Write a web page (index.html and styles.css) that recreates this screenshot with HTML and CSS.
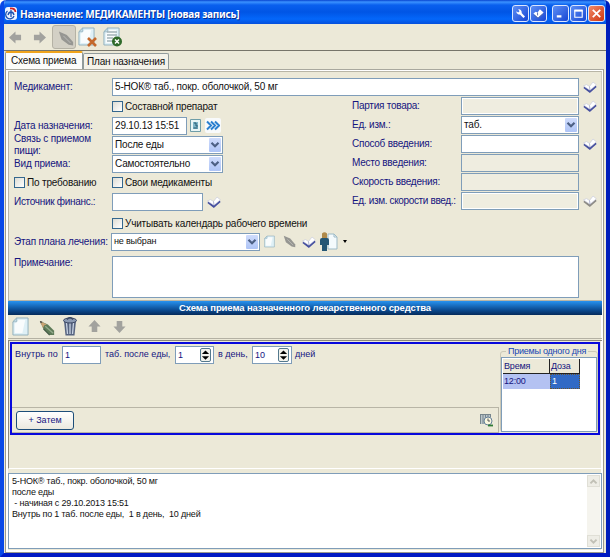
FILE: index.html
```html
<!DOCTYPE html>
<html lang="ru">
<head>
<meta charset="utf-8">
<title>Назначение: МЕДИКАМЕНТЫ</title>
<link rel="stylesheet" href="styles.css">
</head>
<body>
<svg width="0" height="0" class="defs">
  <symbol id="book" viewBox="0 0 14 12"><path d="M1 6.200 6.800 10.600 13 5.200" fill="none" stroke="currentColor" stroke-width="2"/><path d="M.5 5 3.500 3.600 6.500 5.500 10 1 13.300 3.800 7 9.200Z" fill="#fff" stroke="#c3c6da" stroke-width=".6"/><path d="M6.500 5.500 7 9" stroke="#9aa0c4" stroke-width=".8"/></symbol>
  <symbol id="page" viewBox="0 0 18 20"><path d="M5 1h12v18H1V5Z" fill="#dff0f6" stroke="#8faebb"/><path d="M7 3h7l-3 14H3V7Z" fill="#fff" opacity=".8"/><path d="M5 1v4H1Z" fill="#c4dce6" stroke="#8faebb" stroke-width=".7"/></symbol>
  <symbol id="chev" viewBox="0 0 10 8"><path d="M1.500 1.800 5 5.300 8.500 1.800" fill="none" stroke="currentColor" stroke-width="2.200"/></symbol>
  <symbol id="arrow" viewBox="0 0 14 14"><path d="M0 7 7 0.500V4h6v6H7v3.500Z" fill="#a2a29e"/></symbol>
  <symbol id="pencil" viewBox="0 0 18 18"><path d="M1 1 5 10 12 17 17 17 17 12 10 5Z" fill="#5d7a58"/><path d="M1 1 4.500 9 6 6 9 5Z" fill="#c9a273"/><path d="M1 1 2 4 4 2Z" fill="#444"/><path d="M7 7 16 15" stroke="#93ab8c" stroke-width="1.500"/><path d="M5 10 12 17" stroke="#3d5440" stroke-width="1.300"/></symbol>
  <symbol id="pencil-off" viewBox="0 0 18 18"><path d="M1 1 4 10 12 16 17 17 17 13 10 5Z" fill="#969692"/><path d="M6 6 14 14" stroke="#c0c0bc" stroke-width="1"/></symbol>
</svg>
<div class="window">
  <header class="title">
    <svg class="logo" viewBox="0 0 12 13"><rect width="12" height="13" rx="3" fill="#eef3ff"/><path d="M2.500 4A4.300 4.300 0 1 0 9 9M6 3v7M3 8c1-4 5-4 6 0" fill="none" stroke="#1c50b0" stroke-width="1.300"/><path d="M5 1.500Q10 1 10.500 5" fill="none" stroke="#d32525" stroke-width="1.800"/></svg>
    <h1>Назначение: МЕДИКАМЕНТЫ [новая запись]</h1>
    <span class="wb"><svg viewBox="0 0 14 14"><path d="M6 6 11 11" stroke="#fff" stroke-width="2.400"/><path d="M2.500 4.500 4.500 6 6 4.500 4.500 2.500A3.200 3.200 0 0 1 8 7 3.200 3.200 0 0 1 2.500 4.500" fill="#fff"/></svg></span>
    <span class="wb"><svg viewBox="0 0 14 14"><path d="M1.500 7 4 5 6 6 8.500 2.500 12.500 6 6.500 11.500Z" fill="#fff"/><path d="M6 6v3M2 8.500 6.500 12 12 7.500" stroke="#5569a9" fill="none"/></svg></span>
    <span class="wb gap"><svg viewBox="0 0 14 14"><path d="M3 10h5" stroke="#fff" stroke-width="2.400"/></svg></span>
    <span class="wb"><svg viewBox="0 0 14 14"><path d="M3 4h8v7H3Z" fill="none" stroke="#fff" stroke-width="1.200"/><path d="M2.500 3.800h9" stroke="#fff" stroke-width="2"/></svg></span>
    <span class="wb red"><svg viewBox="0 0 14 14"><path d="m3 3 8 8M11 3l-8 8" stroke="#fff" stroke-width="1.900"/></svg></span>
  </header>
  <nav class="bar">
    <svg class="a1"><use href="#arrow"/></svg>
    <svg class="a1 flip"><use href="#arrow"/></svg>
    <span class="pressed"><svg><use href="#pencil-off"/></svg></span>
    <svg class="doc" viewBox="0 0 20 20"><use href="#page" width="17" height="19"/><path d="m10 11 8 8M18 11l-8 8" stroke="#c4682c" stroke-width="2.600"/></svg>
    <svg class="doc" viewBox="0 0 20 20"><use href="#page" width="17" height="19"/><path d="M4 5h10M4 8h10M4 11h6M4 14h6" stroke="#a2b3b8" stroke-width="1.300"/><circle cx="14" cy="14.500" r="5" fill="#2f6a2b"/><path d="m12 12.500 4 4M16 12.500l-4 4" stroke="#fff" stroke-width="1.500"/></svg>
  </nav>
  <div class="tabs"><span class="tab on">Схема приема</span><span class="tab">План назначения</span></div>
  <main class="sheet">
    <section class="form">
      <div class="row r-med"><label class="lb">Медикамент:</label><span class="field grow"><b>5-НОК® таб., покр. оболочкой, 50 мг</b></span><svg class="book"><use href="#book"/></svg></div>
      <div class="cols">
        <div class="left">
          <div class="row r-first"><i class="lb"></i><i class="cb"></i><b>Составной препарат</b></div>
          <div class="row"><label class="lb">Дата назначения:</label><span class="field w-date"><b>29.10.13 15:51</b></span>
            <svg class="cal" viewBox="0 0 11 13"><path d="M.5.500h10v12H.5Z" fill="#e9f5f5" stroke="#6e9da8"/><path d="M3 3h5v7H3Z" fill="#7fb5c8"/><path d="M4 4h2v3h2M3.500 9h4" stroke="#245a70" fill="none"/></svg>
            <span class="next"><svg viewBox="0 0 14 10"><path d="m1 1 4 4-4 4m4-8 4 4-4 4m4-8 4 4-4 4" fill="none" stroke="#2a80cf" stroke-width="2"/></svg></span></div>
          <div class="row"><label class="lb two">Связь с приемом<br>пищи:</label><span class="field w-combo"><b>После еды</b><i class="dd"><svg><use href="#chev"/></svg></i></span></div>
          <div class="row"><label class="lb">Вид приема:</label><span class="field w-combo"><b>Самостоятельно</b><i class="dd"><svg><use href="#chev"/></svg></i></span></div>
          <div class="row"><span class="lb dark"><i class="cb"></i><b>По требованию</b></span><i class="cb"></i><b>Свои медикаменты</b></div>
          <div class="row"><label class="lb tight">Источник финанс.:</label><span class="field w-src"></span><svg class="book"><use href="#book"/></svg></div>
        </div>
        <div class="right">
          <div class="row"><label class="rb">Партия товара:</label><span class="field off"></span><svg class="book"><use href="#book"/></svg></div>
          <div class="row"><label class="rb">Ед. изм.:</label><span class="field"><b>таб.</b><i class="dd"><svg><use href="#chev"/></svg></i></span></div>
          <div class="row"><label class="rb">Способ введения:</label><span class="field"></span><svg class="book"><use href="#book"/></svg></div>
          <div class="row"><label class="rb">Место введения:</label><span class="field flat"></span></div>
          <div class="row"><label class="rb">Скорость введения:</label><span class="field flat"></span></div>
          <div class="row"><label class="rb tight">Ед. изм. скорости введ.:</label><span class="field off"></span><svg class="book gray"><use href="#book"/></svg></div>
        </div>
      </div>
      <div class="row r-cal"><i class="lb"></i><i class="cb"></i><b>Учитывать календарь рабочего времени</b></div>
      <div class="row r-stage"><label class="lb">Этап плана лечения:</label><span class="field w-stage"><b class="small">не выбран</b><i class="dd"><svg><use href="#chev"/></svg></i></span>
        <svg class="s-page"><use href="#page"/></svg><svg class="s-pen"><use href="#pencil-off"/></svg><svg class="book"><use href="#book"/></svg>
        <svg class="s-man" viewBox="0 0 18 19"><path d="M8 2h6l3 3v12H8Z" fill="#f4fafc" stroke="#9dbac6"/><path d="M14 2v3h3" fill="none" stroke="#9dbac6"/><path d="M2 1.500Q4.500-1 7 1.500V6H2Z" fill="#b08a4a"/><path d="M0 8q0-2 2-2h5q2 0 2 2v5H7v6H2v-6H0Z" fill="#245674"/></svg><i class="tri"></i></div>
      <div class="row r-note"><label class="lb">Примечание:</label><span class="field grow"></span></div>
    </section>
    <h2 class="band">Схема приема назначенного лекарственного средства</h2>
    <nav class="bar2">
      <svg class="b-page"><use href="#page"/></svg>
      <svg class="b-pen"><use href="#pencil"/></svg>
      <svg class="b-bin" viewBox="0 0 14 19"><path d="M1 4h12l-1.500 14.500h-9Z" fill="#566480"/><path d="M3.500 6l1 11M7 6v11M10.500 6l-1 11" stroke="#c9d4e4" stroke-width="1.300"/><ellipse cx="7" cy="3.500" rx="6.500" ry="2.500" fill="#8b9ab3" stroke="#3c4964"/><path d="M4 2.500Q7-1.500 10 2.500" fill="none" stroke="#3c4964" stroke-width="1.300"/></svg>
      <svg class="b-ar up"><use href="#arrow"/></svg><svg class="b-ar down"><use href="#arrow"/></svg>
    </nav>
    <section class="well">
      <div class="scheme">
        <div class="plan">
          <div class="dose"><b class="d-in">Внутрь по</b><span class="num">1</span><b class="d-after">таб. после еды,</b><span class="num">1<i><svg viewBox="0 0 10 13"><path d="M1 5.500 5 1.500l4 4ZM1 7.800h8L5 11.800Z"/></svg></i></span><b class="d-day">в день,</b><span class="num last">10<i><svg viewBox="0 0 10 13"><path d="M1 5.500 5 1.500l4 4ZM1 7.800h8L5 11.800Z"/></svg></i></span><b>дней</b></div>
          <div class="then"><span class="btn">+ Затем</span><svg class="clock" viewBox="0 0 14 14"><path d="M0 1h11v10H0Z" fill="#bcc6cb"/><path d="M.5 1v10M3 1v10M5.500 1v4M8 1v3M10.500 1v3M0 1.500h11" stroke="#77858c"/><circle cx="8" cy="8" r="4" fill="#faf7df" stroke="#66809a"/><path d="M8 5.500V8h2" stroke="#555" fill="none"/><path d="M8 12.500h5" stroke="#2e7b35" stroke-width="1.800"/></svg></div>
        </div>
        <fieldset class="takes"><legend>Приемы одного дня</legend>
          <div class="grid"><div class="th">Время</div><div class="th">Доза</div><div class="td">12:00</div><div class="td sel">1</div></div>
        </fieldset>
      </div>
    </section>
    <section class="memo"><div class="lines"><p>5-НОК® таб., покр. оболочкой, 50 мг</p><p>после еды</p><p>&nbsp;- начиная с 29.10.2013 15:51</p><p>Внутрь по 1 таб. после еды,&nbsp; 1 в день,&nbsp; 10 дней</p></div>
      <div class="scroll"><i><svg class="rot"><use href="#chev"/></svg></i><i><svg><use href="#chev"/></svg></i></div></section>
  </main>
</div>
</body>
</html>
```
FILE: styles.css
```css
* { box-sizing: border-box; }
body { margin: 0; width: 610px; height: 557px; overflow: hidden; background: #fff; font: 10px/13px "Liberation Sans", Arial, sans-serif; letter-spacing: -.18px; color: #111; }
b { font-weight: normal; white-space: nowrap; }
i { font-style: normal; }
svg { display: block; flex: none; }
.defs { position: absolute; }
.window { width: 610px; height: 557px; border: solid #0a3fe0; border-width: 0 4px 4px; border-color: #0831d9 #001ebb #0019c4 #0848e8; border-radius: 6px 6px 0 0; background: #ece9d8; overflow: hidden; }
.title { height: 24px; margin: 0 -4px; padding: 3px 5px 0; display: flex; align-items: center; background: linear-gradient(#0844d0 0, #3b92ff 2px, #0a60ee 5px, #0055e5 12px, #0467fa 19px, #0550dc 24px); }
.logo { width: 12px; height: 13px; }
.title h1 { flex: 1; margin: 0 0 0 3px; font: bold 10px/14px "Noto Sans", sans-serif; letter-spacing: -.24px; color: #fff; text-shadow: 1px 1px #0a2b8c; white-space: nowrap; }
.wb { width: 17px; height: 17px; margin-left: 1px; padding: 1px; border: 1px solid #dce7ff; border-radius: 3px; background: linear-gradient(135deg, #5d8ff5, #1746d4); }
.wb svg { width: 13px; height: 13px; }
.wb.gap { margin-left: 5px; }
.wb.red { background: linear-gradient(135deg, #f08a68, #cf3510); }
.bar { height: 27px; border-bottom: 1px solid #77756a; display: flex; align-items: center; padding-left: 5px; }
.a1 { width: 13px; height: 13px; margin-right: 11px; }
.flip { transform: scaleX(-1); margin-right: 6px; }
.pressed { width: 24px; height: 24px; border: 1px solid #b5b2a5; border-radius: 3px; background: #d3d0c5; padding: 4px 2px 0 5px; margin-right: 2px; }
.pressed svg { width: 16px; height: 17px; }
.doc { width: 20px; height: 20px; margin-right: 5px; }
.tabs { height: 18px; display: flex; align-items: flex-end; padding-left: 1px; }
.tab { width: 86px; height: 16px; border: 1px solid #919b9c; border-bottom: 0; border-radius: 2px 2px 0 0; background: #f4f2e9; padding: 1px 3px; white-space: nowrap; }
.tab.on { width: 78px; height: 18px; background: #fcfcfa; border-top: 2px solid #f0a41c; padding: 1px 5px; }
.sheet { height: 484px; border: 1px solid #9b9a8f; border-top: 1px solid #a9a89e; margin: 0 2px 0 1px; padding: 1px 0 0 2px; box-shadow: inset 2px 2px #fff, inset -2px -2px #fff; }
.form { height: 230px; border: 1px solid #b8b5a6; border-right-color: #d2cfc0; padding: 5px 0 0 5px; width: 594px; }
.row { height: 19px; display: flex; align-items: center; }
.lb { width: 98px; color: #15157f; white-space: nowrap; flex: none; }
.two { line-height: 12px; }
.tight { letter-spacing: -.3px; }
.dark { display: flex; color: #111; align-items: center; }
.field { height: 18px; border: 1px solid #7f9db9; background: #fff; display: flex; align-items: center; padding-left: 2px; flex: none; }
.r-med .grow, .r-note .grow { width: 467px; }
.book { width: 14px; height: 12px; margin-left: 4px; color: #4650a0; }
.gray { color: #8d8b86; }
.cb { width: 11px; height: 11px; border: 1px solid #34678e; background: linear-gradient(135deg, #dddcd4, #fff); margin-right: 2px; flex: none; }
.cols { display: flex; height: 115px; }
.left { width: 338px; }
.r-first { height: 20px; }
.w-date { width: 75px; margin-right: 3px; }
.cal { width: 11px; height: 13px; }
.next { width: 16px; height: 15px; margin-left: 4px; padding: 2px 1px; background: #f8fafb; border-radius: 2px; }
.next svg { width: 14px; height: 11px; }
.w-combo { width: 111px; }
.w-src { width: 91px; }
.dd { width: 12px; height: 14px; background: linear-gradient(#cfdcfc, #aec4f6); border-radius: 1px; margin: 0 1px 0 auto; display: grid; place-items: center; color: #4d6185; }
.dd svg { width: 10px; height: 8px; }
.rb { width: 109px; color: #15157f; white-space: nowrap; flex: none; letter-spacing: -.25px; }
.rb.tight { letter-spacing: -.35px; }
.right .field { width: 118px; }
.off, .flat { background: #efede0; }
.off { box-shadow: inset 0 0 0 1px #fff; }
.r-cal { margin-top: 4px; height: 17px; }
.r-stage { height: 19px; }
.w-stage { width: 149px; margin-left: -1px; }
.small { font-size: 9px; }
.s-page { width: 11px; height: 13px; margin-left: 4px; }
.s-pen { width: 13px; height: 13px; margin: 0 2px 0 8px; }
.s-man { width: 18px; height: 19px; margin: 0 5px 0 4px; }
.tri { border: 3px solid transparent; border-top-color: #000; border-bottom: 0; border-width: 3px 2px 0; }
.r-note { height: 42px; margin-top: 5px; align-items: flex-start; }
.r-note .field { height: 42px; }
.band { margin: 0; width: 594px; height: 14px; background: linear-gradient(#2792ef, #0c4f97 60%, #052a5a); color: #fff; text-align: center; font: bold 9.5px/14px "Liberation Sans", Arial, sans-serif; letter-spacing: -.1px; }
.bar2 { height: 24px; width: 594px; border-bottom: 1px solid #b4b1a3; display: flex; align-items: center; padding-left: 4px; }
.b-page { width: 17px; height: 19px; }
.b-pen { width: 16px; height: 16px; margin: 3px 8px 0 10px; }
.b-bin { width: 14px; height: 19px; }
.b-ar { width: 13px; height: 13px; margin-left: 11px; }
.up { transform: rotate(90deg); }
.down { transform: rotate(-90deg); margin-left: 12px; }
.well { width: 594px; height: 129px; margin-top: 1px; border: solid #8b887b; border-width: 1px 0 0 1px; border-bottom: 1px solid #fff; padding: 1px; }
.scheme { width: 590px; height: 93px; border: 2px solid #0808dc; display: flex; color: #15157f; }
.plan { width: 487px; }
.dose { height: 63px; display: flex; align-items: flex-start; padding: 2px 0 0 3px; font-size: 9px; line-height: 16px; letter-spacing: 0; }
.d-in { width: 43px; letter-spacing: .15px; }
.d-after { width: 66px; }
.d-day { width: 30px; }
.num { width: 39px; height: 18px; border: 1px solid #7f9db9; background: #fff; margin: 0 4px; padding-left: 2px; line-height: 16px; display: flex; justify-content: space-between; flex: none; }
.num i { width: 11px; height: 14px; margin: 1px 2px 0 0; border: 1px solid #54798d; border-radius: 2px; background: #f2f2ec; }
.num i svg { width: 9px; height: 12px; }
.num.last { width: 40px; margin-right: 3px; }
.then { height: 26px; border: 1px solid #b8b5a6; border-left: 0; display: flex; align-items: center; justify-content: space-between; padding: 0 4px; }
.btn { width: 58px; height: 19px; border: 1px solid #1d4e79; border-radius: 3px; background: linear-gradient(#fff, #ebe9df); text-align: center; line-height: 17px; font-size: 9px; letter-spacing: 0; }
.clock { width: 14px; height: 14px; }
.takes { margin: 1px 0 0 1px; padding: 0; width: 98px; height: 87px; border: 1px solid #cbc8b7; border-radius: 3px; min-width: 0; }
.takes legend { margin-left: 5px; padding: 0 2px; color: #1746b4; font-size: 9px; line-height: 12px; white-space: nowrap; letter-spacing: -.25px; }
.grid { width: 96px; height: 75px; border: 1px solid #7f9db9; background: #fff; padding: 1px; display: grid; grid-template-columns: 47px 30px; grid-template-rows: 15px 15px; font-size: 9px; line-height: 14px; }
.th { background: #ece9d8; border: solid #222; border-width: 0 1px 1px 0; padding-left: 1px; }
.td { background: #b4c2f2; padding-left: 1px; }
.sel { background: #316ac5; color: #fff; border: 1px dotted #6b542c; line-height: 12px; }
.memo { width: 594px; height: 76px; margin-top: 4px; border: 1px solid #7f9db9; background: #fff; display: flex; justify-content: space-between; }
.lines { padding: 2px 3px; font-size: 9px; line-height: 11px; }
.lines p { margin: 0; white-space: nowrap; }
.scroll { width: 13px; margin: 1px; background: #f5f4ee; display: flex; flex-direction: column; justify-content: space-between; }
.scroll i { height: 12px; background: #eeede6; border: 1px solid #e0dfd6; display: grid; place-items: center; color: #c1c0b6; }
.scroll svg { width: 9px; height: 7px; }
.rot { transform: scaleY(-1); }
```
